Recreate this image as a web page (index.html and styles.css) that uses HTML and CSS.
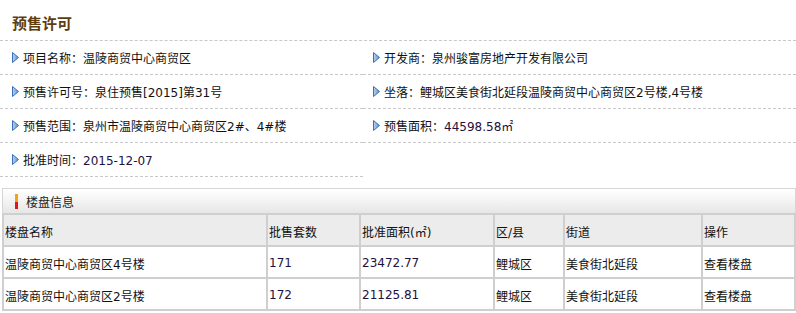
FILE: index.html
```html
<!DOCTYPE html>
<html lang="zh-CN">
<head>
<meta charset="utf-8">
<title>预售许可</title>
<link rel="stylesheet" href="styles.css">
</head>
<body>
<div class="permit">
  <h2 class="permit-title">预售许可</h2>
  <ul class="info">
    <li class="info-item"><svg class="tri" width="7" height="11" viewBox="0 0 7 11"><defs><linearGradient id="g1" x1="0" y1="0" x2="1" y2="0"><stop offset="0" stop-color="#b9d3f0"/><stop offset="1" stop-color="#5d8fd0"/></linearGradient></defs><polygon points="0.5,0.5 6.5,5.5 0.5,10.5" fill="url(#g1)" stroke="#3b6fb8"/></svg><span>项目名称：温陵商贸中心商贸区</span></li>
    <li class="info-item right"><svg class="tri" width="7" height="11" viewBox="0 0 7 11"><polygon points="0.5,0.5 6.5,5.5 0.5,10.5" fill="url(#g1)" stroke="#3b6fb8"/></svg><span>开发商：泉州骏富房地产开发有限公司</span></li>
    <li class="info-item"><svg class="tri" width="7" height="11" viewBox="0 0 7 11"><polygon points="0.5,0.5 6.5,5.5 0.5,10.5" fill="url(#g1)" stroke="#3b6fb8"/></svg><span>预售许可号：泉住预售[2015]第31号</span></li>
    <li class="info-item right"><svg class="tri" width="7" height="11" viewBox="0 0 7 11"><polygon points="0.5,0.5 6.5,5.5 0.5,10.5" fill="url(#g1)" stroke="#3b6fb8"/></svg><span>坐落：鲤城区美食街北延段温陵商贸中心商贸区2号楼,4号楼</span></li>
    <li class="info-item"><svg class="tri" width="7" height="11" viewBox="0 0 7 11"><polygon points="0.5,0.5 6.5,5.5 0.5,10.5" fill="url(#g1)" stroke="#3b6fb8"/></svg><span>预售范围：泉州市温陵商贸中心商贸区2#、4#楼</span></li>
    <li class="info-item right"><svg class="tri" width="7" height="11" viewBox="0 0 7 11"><polygon points="0.5,0.5 6.5,5.5 0.5,10.5" fill="url(#g1)" stroke="#3b6fb8"/></svg><span>预售面积：<span class="num">44598.58㎡</span></span></li>
    <li class="info-item"><svg class="tri" width="7" height="11" viewBox="0 0 7 11"><polygon points="0.5,0.5 6.5,5.5 0.5,10.5" fill="url(#g1)" stroke="#3b6fb8"/></svg><span>批准时间：<span class="num">2015-12-07</span></span></li>
  </ul>
</div>
<div class="panel">
  <div class="panel-head"><span class="mark"></span><span class="panel-title">楼盘信息</span></div>
  <table class="grid">
    <colgroup>
      <col class="c1"><col class="c2"><col class="c3"><col class="c4"><col class="c5"><col class="c6">
    </colgroup>
    <thead>
      <tr><th>楼盘名称</th><th>批售套数</th><th>批准面积(㎡)</th><th>区/县</th><th>街道</th><th>操作</th></tr>
    </thead>
    <tbody>
      <tr><td>温陵商贸中心商贸区4号楼</td><td class="num">171</td><td class="num">23472.77</td><td>鲤城区</td><td>美食街北延段</td><td>查看楼盘</td></tr>
      <tr><td>温陵商贸中心商贸区2号楼</td><td class="num">172</td><td class="num">21125.81</td><td>鲤城区</td><td>美食街北延段</td><td>查看楼盘</td></tr>
    </tbody>
  </table>
</div>
</body>
</html>
```

FILE: styles.css
```css
html, body {
  margin: 0;
  padding: 0;
  background: #fff;
}
body {
  font-family: "DejaVu Sans", "Noto Sans CJK SC", sans-serif;
  font-size: 12px;
  color: #111;
  width: 796px;
  overflow: hidden;
}
.permit-title {
  margin: 0;
  box-sizing: border-box;
  height: 41px;
  padding: 11px 0 0 12px;
  line-height: 24px;
  font-size: 15px;
  font-weight: bold;
  color: #5e3d0e;
  font-family: "Noto Sans CJK SC", sans-serif;
  border-bottom: 1px dashed #c8c8c8;
}
.info {
  list-style: none;
  margin: 0;
  padding: 0;
  display: grid;
  grid-template-columns: 363px 1fr;
}
.info-item {
  display: flex;
  align-items: center;
  gap: 4px;
  height: 33px;
  padding-left: 12px;
  border-bottom: 1px dashed #c8c8c8;
}
.info-item.right {
  padding-left: 10px;
}
.tri {
  flex: none;
  display: block;
}
.num {
  color: #221040;
}
.panel {
  margin-top: 11px;
}
.panel-head {
  margin-left: 2px;
  width: 792px;
  height: 24px;
  border: 1px solid #d6d6d6;
  border-bottom: none;
  background: linear-gradient(#ffffff, #f6f6f6 40%, #e6e6e6);
  display: flex;
  align-items: center;
}
.mark {
  width: 3px;
  height: 15px;
  margin-left: 12px;
  background: linear-gradient(#f7a11a 0 50%, #e2141c 50% 100%);
}
.panel-title {
  margin-left: 8px;
  color: #222;
  font-family: "Noto Sans CJK SC", sans-serif;
}
.grid {
  margin-left: 2px;
  width: 794px;
  table-layout: fixed;
  border-collapse: separate;
  border-spacing: 2px;
  background: #cfcfcf;
}
.c1 { width: 262px; }
.c2 { width: 91px; }
.c3 { width: 132px; }
.c4 { width: 68px; }
.c5 { width: 136px; }
.c6 { width: 91px; }
.grid th,
.grid td {
  height: 30px;
  padding: 2px 0 0 1px;
  box-sizing: border-box;
  text-align: left;
  font-weight: normal;
  white-space: nowrap;
  overflow: hidden;
  vertical-align: middle;
}
.grid th {
  background: #ececec;
}
.grid td {
  background: #fff;
}
```
